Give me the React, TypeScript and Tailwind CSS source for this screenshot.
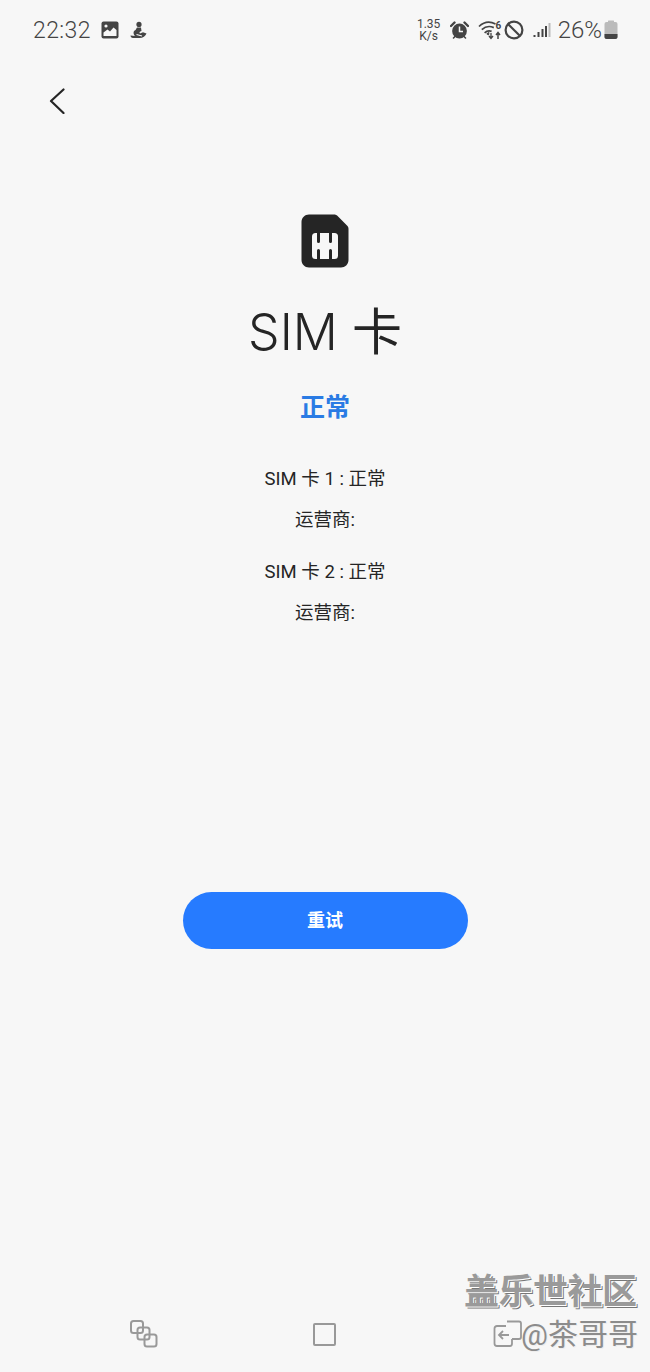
const sans = '"Roboto", "Noto Sans CJK SC", sans-serif';
const cjk = '"Inter", "Noto Sans CJK SC", sans-serif';

function GalleryIcon() {
  return (
    <svg width="18" height="18" viewBox="0 0 18 18">
      <rect x="0.5" y="0.5" width="17" height="17" rx="2" fill="#444" />
      <path d="M2.5 15V11.5L6.5 8.5L9 10.5L12.5 6.5L15.5 9V15Z" fill="#f7f7f7" />
      <circle cx="5" cy="5" r="1.6" fill="#f7f7f7" />
    </svg>
  );
}

function MermaidIcon() {
  return (
    <svg width="17" height="18" viewBox="0 0 17 18" fill="#444">
      <circle cx="9" cy="3.4" r="2.6" />
      <path d="M7 6.5H11L11.5 10C9.5 10.5 9 11.5 10 12.5L13 11.2L16.5 12.5C15.5 15 13 17 9.5 17H3C1.5 17 0.5 16 0.5 14.5L5 15C3 13 3 10 5.5 9Z" />
      <path d="M6.5 13.5L12 15" stroke="#f7f7f7" strokeWidth="1.2" fill="none" />
    </svg>
  );
}

function AlarmIcon() {
  return (
    <svg width="19" height="19" viewBox="0 0 19 19">
      <circle cx="9.5" cy="10" r="7.4" fill="#444" />
      <path d="M1 5L4.5 1.5M18 5L14.5 1.5" stroke="#444" strokeWidth="2.4" strokeLinecap="round" />
      <path d="M3.5 17L5 15.5M15.5 17L14 15.5" stroke="#444" strokeWidth="1.6" strokeLinecap="round" />
      <path d="M9.5 5.5V10.5H13" stroke="#f7f7f7" strokeWidth="1.5" fill="none" />
    </svg>
  );
}

function WifiIcon() {
  return (
    <svg width="26" height="20" viewBox="0 0 26 20" fill="none">
      <path d="M1 6.5C6 1.8 12 1.2 17.5 4" stroke="#444" strokeWidth="1.7" />
      <path d="M3.8 9.7C7.5 6.2 11.8 5.8 15.8 7.6" stroke="#444" strokeWidth="1.7" />
      <path d="M6.6 12.8C8.8 10.8 11.2 10.4 13.6 11.4" stroke="#444" strokeWidth="1.7" />
      <path d="M10.5 15L8.8 13.8L11 12.5Z" fill="#444" stroke="#444" />
      <path d="M13 13V18M11 16L13 18.5L15 16" stroke="#444" strokeWidth="1.3" />
      <path d="M20 19V13M18 15L20 12.5L22 15" stroke="#444" strokeWidth="1.5" />
      <text x="17.5" y="9" fontSize="10" fontFamily="Roboto, sans-serif" fontWeight="700" fill="#444">6</text>
    </svg>
  );
}

function BlockIcon() {
  return (
    <svg width="20" height="20" viewBox="0 0 20 20" fill="none" stroke="#444" strokeWidth="2.2">
      <circle cx="10" cy="10" r="8.4" />
      <path d="M4.2 4.2L15.8 15.8" />
    </svg>
  );
}

function SignalIcon() {
  return (
    <svg width="18" height="16" viewBox="0 0 18 16">
      <rect x="0.5" y="13" width="2" height="2" fill="#444" />
      <rect x="4.5" y="10" width="2" height="5" fill="#444" />
      <rect x="8.5" y="7" width="2" height="8" fill="#444" />
      <rect x="12" y="4" width="2" height="11" fill="#444" />
      <rect x="15.5" y="1" width="2" height="14" fill="#bbb" />
    </svg>
  );
}

function BatteryIcon() {
  return (
    <svg width="14" height="20" viewBox="0 0 14 20">
      <rect x="4" y="0.5" width="6" height="2" rx="0.5" fill="#bbb" />
      <rect x="0.5" y="2" width="13" height="17" rx="2" fill="#bbb" />
      <path d="M0.5 14H13.5V17C13.5 18.1 12.6 19 11.5 19H2.5C1.4 19 0.5 18.1 0.5 17Z" fill="#444" />
    </svg>
  );
}

function SimIcon() {
  return (
    <svg width="48" height="54" viewBox="0 0 48 54">
      <path d="M8 0.5H33C34.5 0.5 35.6 1 36.6 2L46 11.5C47 12.5 47.5 13.6 47.5 15V46C47.5 50.5 44 53.5 40 53.5H8C3.8 53.5 0.5 50.2 0.5 46V8C0.5 3.8 3.8 0.5 8 0.5Z" fill="#252525" />
      <rect x="11" y="19" width="26" height="26" rx="3.5" fill="#f7f7f7" />
      <path d="M17.5 18V27.5M29.5 18V27.5M17.5 36.5V46M29.5 36.5V46" stroke="#252525" strokeWidth="3" strokeLinecap="round" />
    </svg>
  );
}

function RecentsIcon() {
  return (
    <svg width="28" height="28" viewBox="0 0 28 28" fill="none" stroke="#999" strokeWidth="2">
      <rect x="1" y="1" width="12" height="12" rx="2.5" />
      <rect x="7.5" y="7.5" width="12" height="12" rx="2.5" />
      <rect x="14.5" y="14.5" width="12" height="12" rx="2.5" />
    </svg>
  );
}

function BackNavIcon() {
  return (
    <svg width="30" height="30" viewBox="0 0 30 30" fill="none" stroke="#999" strokeWidth="1.8">
      <path d="M13 6H4C2.5 6 1.5 7 1.5 8.5V23.5C1.5 25 2.5 26 4 26H17C18.5 26 19 25 19 23.5V19" />
      <path d="M14 1.5H26C27 1.5 28 2.5 28 3.5V17C28 18 27 19 26 19H19" />
      <path d="M16 15H6M10 11L6 15L10 19" />
    </svg>
  );
}

export default function App() {
  return (
    <div className="relative flex h-[1372px] w-[650px] flex-col overflow-hidden bg-[#f7f7f7]" style={{ fontFamily: sans }}>
      {/* status bar */}
      <div className="flex h-[60px] items-center pl-[33px] pr-[32px] text-[#444]">
        <span className="text-[23px] font-light leading-none tracking-[0.4px]">22:32</span>
        <div className="ml-[10px]"><GalleryIcon /></div>
        <div className="ml-[11px]"><MermaidIcon /></div>
        <div className="ml-auto flex items-center">
          <div className="flex w-[26px] flex-col items-center text-[12px] leading-[12px]">
            <span>1.35</span>
            <span>K/s</span>
          </div>
          <div className="ml-[8px]"><AlarmIcon /></div>
          <div className="ml-[9px]"><WifiIcon /></div>
          <div className="ml-[0px]"><BlockIcon /></div>
          <div className="ml-[9px]"><SignalIcon /></div>
          <span className="ml-[7px] text-[24px] font-light leading-none">26%</span>
          <div className="ml-[2px]"><BatteryIcon /></div>
        </div>
      </div>

      {/* back */}
      <div className="flex h-[82px] items-center pl-[49px]">
        <svg width="16" height="26" viewBox="0 0 16 26" fill="none" stroke="#252525" strokeWidth="2.2" strokeLinecap="round" strokeLinejoin="round" className="mb-[1px]">
          <path d="M14.5 1.5L2 13L14.5 25" />
        </svg>
      </div>

      {/* content */}
      <div className="flex flex-col items-center pt-[72px]">
        <SimIcon />
        <h1 className="mt-[32px] text-[50px] font-light leading-[64px] text-[#252525]" style={{ fontFamily: cjk }}>
          SIM <span className="font-normal">卡</span>
        </h1>
        <p className="mt-[27px] text-[25px] font-bold leading-[32px] text-[#2a7be4]" style={{ fontFamily: cjk }}>正常</p>
        <div className="mt-[44px] flex flex-col items-center text-[18.5px] leading-[24px] text-[#252525]">
          <p>SIM 卡 1 : 正常</p>
          <p className="mt-[17px]">运营商:</p>
          <p className="mt-[28px]">SIM 卡 2 : 正常</p>
          <p className="mt-[17px]">运营商:</p>
        </div>
        <button className="mt-[267px] flex h-[57px] w-[285px] items-center justify-center rounded-full bg-[#267bff] text-[18px] font-bold text-white">
          重试
        </button>
      </div>

      {/* nav bar */}
      <div className="mt-auto flex h-[52px] items-start">
        <div className="ml-[130px]"><RecentsIcon /></div>
        <div className="ml-[155px] mt-[3px] h-[23px] w-[23px] rounded-[2px] border-[2px] border-[#999]" />
        <div className="ml-[157px]"><BackNavIcon /></div>
      </div>

      {/* watermark */}
      <div className="absolute left-[464px] top-[1270px] text-[35px] font-bold leading-[42px] tracking-[-0.5px] text-[#9a9a9a] [text-shadow:1px_1px_0_#fff,2px_2px_0_#777]" style={{ fontFamily: cjk }}>
        盖乐世社区
      </div>
      <div className="absolute left-[521px] top-[1317px] text-[30px] leading-[36px] text-[#8c8c8c] [text-shadow:1px_1px_0_#eee]" style={{ fontFamily: sans }}>
        @茶哥哥
      </div>
    </div>
  );
}
